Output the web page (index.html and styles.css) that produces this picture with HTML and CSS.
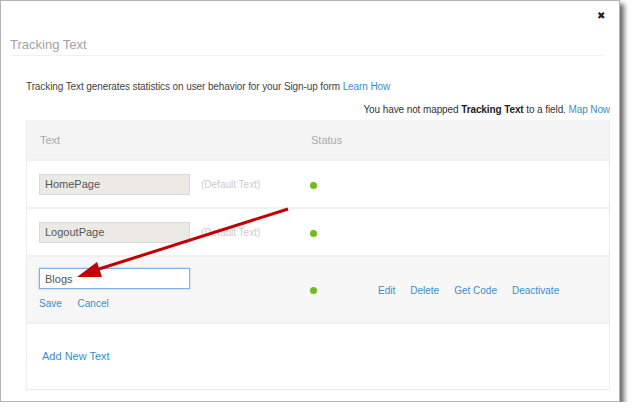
FILE: index.html
```html
<!DOCTYPE html>
<html lang="en">
<head>
    <meta charset="UTF-8">
    <title>Tracking Text</title>
    <link rel="stylesheet" href="styles.css">
</head>
<body>

    <div class="dialog">
        <div class="top-bar">
            <span class="close">&#x2716;</span>
        </div>
        <h2 class="title">Tracking Text</h2>

        <p class="intro">Tracking Text generates statistics on user behavior for your Sign-up form <a href="#">Learn How</a></p>
        <p class="notice">You have not mapped <strong>Tracking Text</strong> to a field. <a href="#">Map Now</a></p>

        <div class="tracking-table">
            <div class="row head">
                <div class="cell text-col">Text</div>
                <div class="cell status-col">Status</div>
            </div>

            <div class="row">
                <div class="cell text-col">
                    <input type="text" class="text-input" value="HomePage" readonly>
                    <span class="default-tag">(Default Text)</span>
                </div>
                <div class="cell status-col"><span class="dot"></span></div>
            </div>

            <div class="row">
                <div class="cell text-col">
                    <input type="text" class="text-input" value="LogoutPage" readonly>
                    <span class="default-tag">(Default Text)</span>
                </div>
                <div class="cell status-col"><span class="dot"></span></div>
            </div>

            <div class="row editing">
                <div class="cell text-col stacked">
                    <input type="text" class="text-input active" value="Blogs">
                    <div class="edit-links">
                        <a href="#">Save</a>
                        <a href="#">Cancel</a>
                    </div>
                </div>
                <div class="cell status-col"><span class="dot"></span></div>
                <div class="cell actions">
                    <a href="#">Edit</a>
                    <a href="#">Delete</a>
                    <a href="#">Get Code</a>
                    <a href="#">Deactivate</a>
                </div>
            </div>

            <div class="row add-row">
                <a href="#" class="add-link">Add New Text</a>
            </div>
        </div>

        <!-- annotation arrow drawn over the screenshot -->
        <svg class="arrow" width="620" height="402" viewBox="0 0 620 402">
            <line x1="288" y1="209" x2="99" y2="269" stroke="#c40000" stroke-width="3"/>
            <polygon points="77,277 102,277 97,262" fill="#c40000"/>
        </svg>
    </div>

</body>
</html>
```

FILE: styles.css
```css
body {
    margin: 0;
    padding: 0;
    background-color: #fff;
    font-family: "Liberation Sans", Arial, sans-serif;
}
a {
    color: #3a8dcc;
    text-decoration: none;
}
.dialog {
    position: relative;
    width: 618px;
    height: 400px;
    border: 1px solid #b3b3b3;
    background-color: #fff;
    box-shadow: 4px 4px 5px rgba(0, 0, 0, 0.6);
}
.top-bar {
    height: 30px;
    display: flex;
    justify-content: flex-end;
    align-items: center;
    padding-right: 14px;
}
.close {
    font-size: 10px;
    color: #222;
    margin-top: -2px;
}
.title {
    margin: 6px 16px 0 9px;
    padding-bottom: 2px;
    font-size: 13px;
    line-height: 16px;
    font-weight: normal;
    color: #a3a3a3;
    border-bottom: 1px solid #f0f0f0;
}
.intro {
    margin: 24px 0 0 25px;
    font-size: 10px;
    line-height: 14px;
    letter-spacing: -0.1px;
    color: #444;
}
.notice {
    margin: 9px 9px 0 0;
    text-align: right;
    font-size: 10px;
    line-height: 14px;
    letter-spacing: -0.1px;
    color: #333;
}
.notice strong {
    color: #222;
}
.tracking-table {
    margin: 3px 9px 0 25px;
    border: 1px solid #ededed;
    border-top: none;
}
.row {
    display: flex;
    align-items: center;
    height: 46px;
    border-top: 2px solid #f1f1f1;
    background-color: #fff;
}
.row.head {
    height: 39px;
    border-top: none;
    background-color: #f4f4f4;
    font-size: 11px;
    color: #aaa;
}
.row.editing {
    height: 65px;
    align-items: flex-start;
    background-color: #f7f7f7;
}
.cell.text-col {
    width: 260px;
    padding-left: 12px;
    display: flex;
    align-items: center;
}
.row.head .text-col {
    padding-left: 13px;
}
.cell.status-col {
    width: 68px;
    padding-left: 11px;
}
.row.editing .cell {
    align-self: stretch;
    display: flex;
    align-items: center;
}
.row.editing .status-col {
    padding-top: 2px;
}
.row.editing .text-col.stacked {
    flex-direction: column;
    align-items: flex-start;
    padding-top: 11px;
}
.text-input {
    box-sizing: border-box;
    width: 151px;
    height: 21px;
    padding: 0 5px;
    margin: 0;
    font-family: "Liberation Sans", Arial, sans-serif;
    font-size: 11px;
    color: #555;
    background-color: #ebeae5;
    border: 1px solid #d3dae3;
    outline: none;
}
.text-input.active {
    background-color: #fff;
    border: 1px solid #7eb1e6;
    box-shadow: 0 0 2px rgba(82, 150, 220, 0.5);
}
.default-tag {
    margin-left: 11px;
    font-size: 10px;
    color: #ccc;
}
.edit-links {
    margin-top: 9px;
    font-size: 10px;
}
.edit-links a {
    margin-right: 13px;
}
.dot {
    display: inline-block;
    width: 7px;
    height: 7px;
    border-radius: 50%;
    background-color: #6cbd18;
}
.actions {
    padding-top: 2px;
    font-size: 10px;
}
.actions a {
    margin-right: 15px;
}
.row.add-row {
    height: 65px;
    padding-left: 15px;
}
.add-link {
    font-size: 11px;
    margin-top: -2px;
}
.arrow {
    position: absolute;
    left: -1px;
    top: -1px;
    pointer-events: none;
}
```
